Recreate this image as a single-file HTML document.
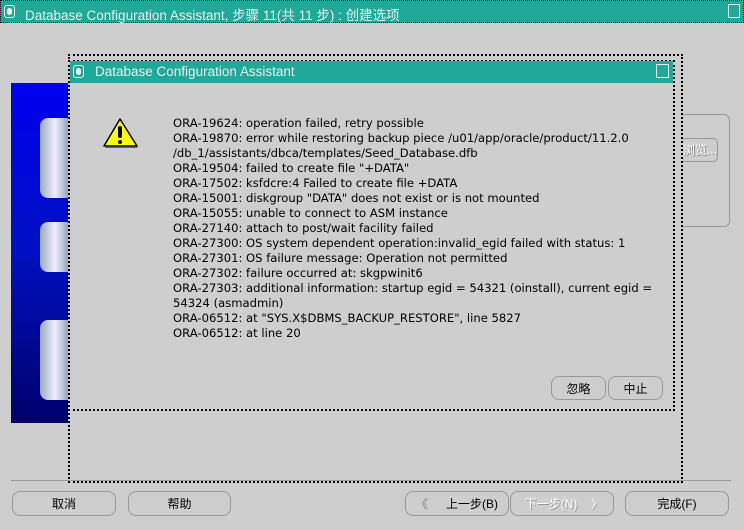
<!DOCTYPE html>
<html><head><meta charset="utf-8"><style>
*{margin:0;padding:0;box-sizing:border-box}
body{width:744px;height:530px;background:#cecece;position:relative;overflow:hidden;font-family:"Liberation Sans","Noto Sans CJK SC",sans-serif;font-size:12px;color:#000}
.abs{position:absolute}
.tb{background:#20a898;color:#e8f0ee;font-size:13.5px;border:1px dotted #000}
.btn{position:absolute;border:1px solid #999;border-radius:8px;text-align:center;font-size:12px;line-height:24px;background:#cecece}
.dot{border:2px dotted #000}
</style></head><body>
<div class="abs tb" style="left:0;top:0;width:744px;height:23px;">
 <div class="abs" style="left:3px;top:4px;width:11px;height:13px;border:1px solid #e8f0ee;border-radius:3px"><div style="margin:2px;width:5px;height:7px;background:#e8f0ee;border-radius:3px"></div></div>
 <div class="abs" style="left:24px;top:3px">Database Configuration Assistant, 步骤 11(共 11 步) : 创建选项</div>
 <div class="abs" style="left:727px;top:3px;width:12px;height:14px;border:1px solid #e8f0ee"></div>
</div>
<div class="abs" style="left:11px;top:83px;width:58px;height:340px;background:linear-gradient(180deg,#0000f0 0%,#0010c0 50%,#00006a 100%)"></div>
<div class="abs" style="left:40px;top:118px;width:30px;height:80px;background:linear-gradient(90deg,#9ab 0%,#eef 50%,#89a 100%);border-radius:8px 0 0 8px"></div>
<div class="abs" style="left:40px;top:222px;width:30px;height:50px;background:linear-gradient(90deg,#9ab 0%,#eef 50%,#89a 100%);border-radius:8px 0 0 8px"></div>
<div class="abs" style="left:40px;top:320px;width:30px;height:80px;background:linear-gradient(90deg,#9ab 0%,#eef 50%,#89a 100%);border-radius:8px 0 0 8px"></div>
<div class="abs" style="left:660px;top:114px;width:70px;height:113px;border:1px solid #999;border-radius:6px"></div>
<div class="abs" style="left:668px;top:138px;width:50px;height:24px;border:1px solid #999;border-radius:5px;color:#fff;text-shadow:1px 1px #888;line-height:22px;padding-left:14px">浏览...</div>
<div class="abs dot" style="left:68px;top:54px;width:615px;height:429px;background:#cecece"></div>
<div class="abs dot" style="left:68px;top:60px;width:607px;height:351px;background:#cecece"></div>
<div class="abs tb" style="left:70px;top:61px;width:603px;height:22px;border:none">
 <div class="abs" style="left:3px;top:4px;width:11px;height:13px;border:1px solid #e8f0ee;border-radius:3px"><div style="margin:2px;width:5px;height:7px;background:#e8f0ee;border-radius:3px"></div></div>
 <div class="abs" style="left:25px;top:3px">Database Configuration Assistant</div>
 <div class="abs" style="left:586px;top:3px;width:13px;height:14px;border:1px solid #e8f0ee"></div>
</div>
<svg class="abs" style="left:102px;top:117px" width="38" height="32"><polygon points="18,2 35,29 2,29" fill="#ffff00" stroke="#000" stroke-width="1.5" stroke-linejoin="round"/><polygon points="3,30 36,30 35,31 4,31" fill="#666"/><rect x="16" y="9" width="4" height="12" rx="2" fill="#000"/><circle cx="18" cy="25" r="2" fill="#000"/></svg>
<div class="abs" style="left:173px;top:116px;line-height:15px;white-space:pre;font-family:'DejaVu Sans',sans-serif;font-size:11.6px">ORA-19624: operation failed, retry possible
ORA-19870: error while restoring backup piece /u01/app/oracle/product/11.2.0
/db_1/assistants/dbca/templates/Seed_Database.dfb
ORA-19504: failed to create file "+DATA"
ORA-17502: ksfdcre:4 Failed to create file +DATA
ORA-15001: diskgroup "DATA" does not exist or is not mounted
ORA-15055: unable to connect to ASM instance
ORA-27140: attach to post/wait facility failed
ORA-27300: OS system dependent operation:invalid_egid failed with status: 1
ORA-27301: OS failure message: Operation not permitted
ORA-27302: failure occurred at: skgpwinit6
ORA-27303: additional information: startup egid = 54321 (oinstall), current egid =
54324 (asmadmin)
ORA-06512: at "SYS.X$DBMS_BACKUP_RESTORE", line 5827
ORA-06512: at line 20</div>
<div class="btn" style="left:551px;top:376px;width:55px;height:24px">忽略</div>
<div class="btn" style="left:608px;top:376px;width:55px;height:24px">中止</div>
<div class="abs" style="left:11px;top:480px;width:720px;height:1px;background:#999"></div>
<div class="btn" style="left:12px;top:491px;width:104px;height:25px">取消</div>
<div class="btn" style="left:128px;top:491px;width:103px;height:25px">帮助</div>
<div class="btn" style="left:405px;top:491px;width:104px;height:25px"><span style="position:absolute;left:10px;color:#888">《</span><span style="padding-left:30px">上一步(B)</span></div>
<div class="btn" style="left:510px;top:491px;width:104px;height:25px;color:#fff;text-shadow:1px 1px #999"><span style="padding-right:22px">下一步(N)</span><span style="position:absolute;right:10px;color:#fff">〉</span></div>
<div class="btn" style="left:625px;top:491px;width:104px;height:25px">完成(F)</div>
</body></html>
